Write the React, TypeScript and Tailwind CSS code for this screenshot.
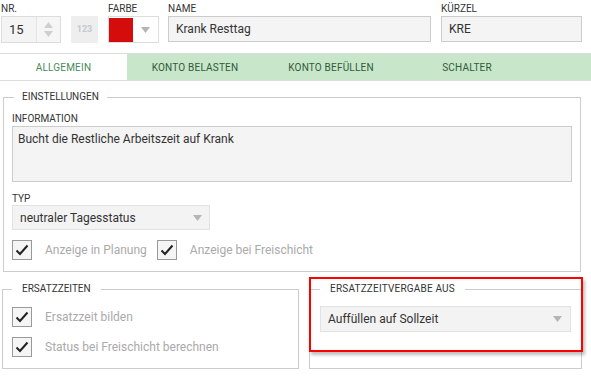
import React from "react";

function Arrow({ className = "" }: { className?: string }) {
  return (
    <svg width="9" height="6" viewBox="0 0 9 6" className={className}>
      <path d="M0 0 L9 0 L4.5 6 Z" fill="#b5b5b5" />
    </svg>
  );
}

function Check() {
  return (
    <div className="w-[20px] h-[20px] border border-[#999] bg-[#f5f5f5] flex items-center justify-center shrink-0">
      <svg width="14" height="12" viewBox="0 0 14 12">
        <path d="M1.5 6.5 L5 10 L12.5 1.5" fill="none" stroke="#222" strokeWidth="2" />
      </svg>
    </div>
  );
}

function Label({ children }: { children: React.ReactNode }) {
  return <div className="text-[10px] leading-[12px] text-[#333] uppercase">{children}</div>;
}

export default function App() {
  return (
    <div className="w-[591px] h-[382px] bg-white relative overflow-hidden font-['Roboto',sans-serif] text-[#333]">
      {/* top row */}
      <div className="flex items-start pt-[3px] pl-[1px]">
        <div className="w-[60px]">
          <Label>Nr.</Label>
          <div className="mt-[1px] h-[27px] border border-[#ddd] flex">
            <div className="w-[34px] bg-[#f4f4f4] text-[13px] leading-[25px] pl-[7px] text-[#333]">15</div>
            <div className="flex-1 border-l border-[#e4e4e4] bg-[#f6f6f6] flex flex-col items-center justify-center gap-[3px]">
              <svg width="9" height="6" viewBox="0 0 9 6"><path d="M0 6 L9 6 L4.5 0 Z" fill="#cfcfcf" /></svg>
              <svg width="9" height="6" viewBox="0 0 9 6"><path d="M0 0 L9 0 L4.5 6 Z" fill="#cfcfcf" /></svg>
            </div>
          </div>
        </div>
        <div className="ml-[10px] mt-[13px] w-[27px] h-[27px] bg-[#eeeeee] flex items-center justify-center text-[9px] font-bold text-[#c8c8c8]">
          123
        </div>
        <div className="ml-[10px] w-[51px]">
          <Label>Farbe</Label>
          <div className="mt-[1px] h-[27px] border border-[#ddd] bg-white flex items-center">
            <div className="w-[24px] h-[24px] ml-[0px] bg-[#d50c0c]" />
            <div className="flex-1 flex justify-center">
              <Arrow />
            </div>
          </div>
        </div>
        <div className="ml-[9px] w-[263px]">
          <Label>Name</Label>
          <div className="mt-[1px] h-[26px] border border-[#ccc] bg-[#f4f4f4] text-[12px] leading-[24px] pl-[7px] text-[#333]">
            Krank Resttag
          </div>
        </div>
        <div className="ml-[10px] w-[141px]">
          <Label>Kürzel</Label>
          <div className="mt-[1px] h-[26px] border border-[#ccc] bg-[#f4f4f4] text-[12px] leading-[24px] pl-[7px] text-[#333]">
            KRE
          </div>
        </div>
      </div>

      {/* tabs */}
      <div className="mt-[10px] h-[28px] border-t border-b border-[#dcdcdc] flex text-[10px] tracking-[0.2px] uppercase">
        <div className="w-[127px] bg-white flex items-center justify-center text-[#4a8a5a]">Allgemein</div>
        <div className="flex-1 bg-[#c8e6c9] flex">
          <div className="w-[136px] flex items-center justify-center text-[#2f5b3a]">Konto belasten</div>
          <div className="w-[136px] flex items-center justify-center text-[#2f5b3a]">Konto befüllen</div>
          <div className="w-[136px] flex items-center justify-center text-[#2f5b3a]">Schalter</div>
        </div>
      </div>

      {/* Einstellungen */}
      <fieldset className="mt-[10px] ml-[3px] w-[578px] border border-[#ccc] px-[8px] pt-[10px] pb-[11px]">
        <legend className="ml-[2px] px-[8px] text-[10px] leading-[12px] uppercase text-[#333]">Einstellungen</legend>
        <div className="h-[13px] text-[10px] leading-[12px] uppercase">Information</div>
        <div className="h-[56px] border border-[#ccc] bg-[#f4f4f4] text-[12px] leading-[16px] px-[5px] pt-[4px] text-[#333]">
          Bucht die Restliche Arbeitszeit auf Krank
        </div>
        <div className="mt-[11px] h-[12px] text-[10px] leading-[12px] uppercase">Typ</div>
        <div className="w-[198px] h-[25px] border border-[#e2e2e2] bg-[#f3f3f3] flex items-center justify-between pl-[7px] pr-[7px] text-[12px]">
          <span>neutraler Tagesstatus</span>
          <Arrow />
        </div>
        <div className="mt-[10px] flex items-center h-[20px]">
          <Check />
          <span className="ml-[13px] text-[12px] text-[#aaa]">Anzeige in Planung</span>
          <div className="ml-[10px]">
            <Check />
          </div>
          <span className="ml-[13px] text-[12px] text-[#aaa]">Anzeige bei Freischicht</span>
        </div>
      </fieldset>

      {/* bottom row */}
      <div className="flex items-start mt-[11px]">
        <fieldset className="ml-[2px] w-[297px] h-[86px] border border-[#ccc] px-[9px] pt-[12px]">
          <legend className="ml-[0px] px-[10px] text-[10px] leading-[12px] uppercase text-[#333]">Ersatzzeiten</legend>
          <div className="flex items-center h-[20px]">
            <Check />
            <span className="ml-[13px] text-[12px] text-[#aaa]">Ersatzzeit bilden</span>
          </div>
          <div className="mt-[10px] flex items-center h-[20px]">
            <Check />
            <span className="ml-[13px] text-[12px] text-[#aaa]">Status bei Freischicht berechnen</span>
          </div>
        </fieldset>
        <fieldset className="ml-[10px] w-[273px] h-[86px] border border-[#ccc] px-[10px] pt-[11px]">
          <legend className="ml-[0px] px-[10px] text-[10px] leading-[12px] uppercase text-[#333] tracking-[0.2px]">Ersatzzeitvergabe aus</legend>
          <div className="h-[26px] border border-[#e2e2e2] bg-[#f3f3f3] flex items-center justify-between pl-[7px] pr-[8px] text-[12px]">
            <span>Auffüllen auf Sollzeit</span>
            <Arrow />
          </div>
        </fieldset>
      </div>

      {/* red highlight overlay */}
      <div className="absolute left-[309px] top-[277px] w-[274px] h-[75px] border-2 border-[#ff0000] shadow-[2px_3px_3px_rgba(0,0,0,0.25)] pointer-events-none" />
    </div>
  );
}
